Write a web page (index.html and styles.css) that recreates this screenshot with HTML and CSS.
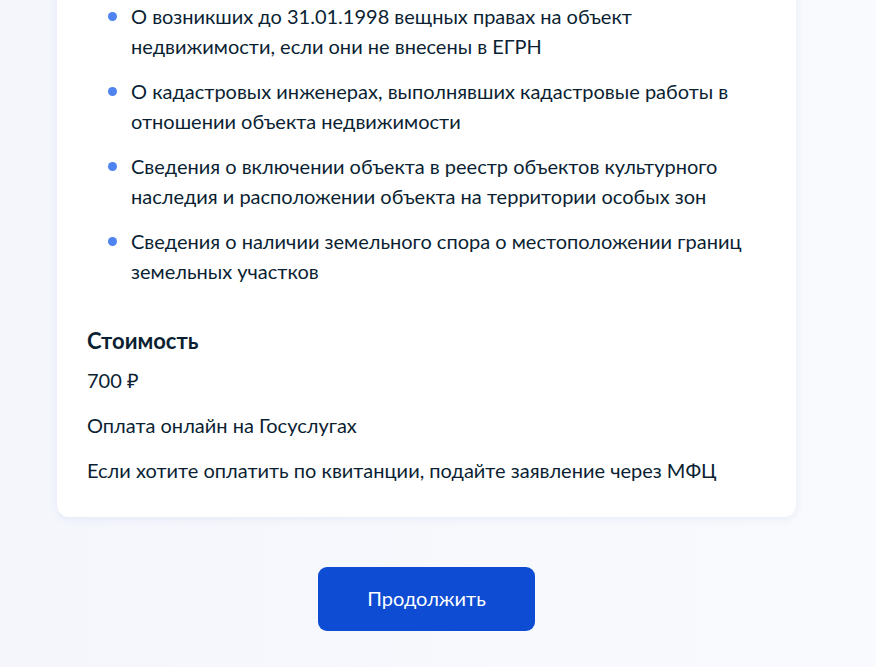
FILE: index.html
```html
<!DOCTYPE html>
<html lang="ru">
<head>
<meta charset="utf-8">
<link rel="stylesheet" href="styles.css">
</head>
<body>
<div class="page">
  <div class="card">
    <ul class="list">
      <li>О возникших до 31.01.1998 вещных правах на объект недвижимости, если они не внесены в ЕГРН</li>
      <li>О кадастровых инженерах, выполнявших кадастровые работы в отношении объекта недвижимости</li>
      <li>Сведения о включении объекта в реестр объектов культурного наследия и расположении объекта на территории особых зон</li>
      <li>Сведения о наличии земельного спора о местоположении границ земельных участков</li>
    </ul>
    <h3 class="title">Стоимость</h3>
    <p class="text">700 ₽</p>
    <p class="text">Оплата онлайн на Госуслугах</p>
    <p class="text">Если хотите оплатить по квитанции, подайте заявление через МФЦ</p>
  </div>
  <div class="actions">
    <button class="btn">Продолжить</button>
  </div>
</div>
</body>
</html>
```
FILE: styles.css
```css
html, body {
  margin: 0;
  padding: 0;
}
body {
  background: linear-gradient(90deg, #f4f6fc 0%, #f7f9fd 60%, #f9fafd 100%);
  font-family: Lato, "Open Sans", sans-serif;
  color: #0b1f33;
  height: 667px;
  overflow: hidden;
}
.page {
  width: 739px;
  margin-left: 57px;
}
.card {
  background: #fff;
  border-radius: 0 0 12px 12px;
  box-shadow: 0 2px 8px rgba(40, 80, 160, 0.08);
  padding: 0 30px 32px 30px;
  margin-top: -23px;
}
.list {
  list-style: none;
  margin: 0;
  padding: 24px 0 0 0;
}
.list li {
  position: relative;
  padding-left: 44px;
  font-size: 20px;
  line-height: 30px;
  margin-bottom: 15px;
}
.list li::before {
  content: "";
  position: absolute;
  left: 21px;
  top: 11px;
  width: 9px;
  height: 9px;
  border-radius: 50%;
  background: #4f83f0;
}
.title {
  margin: 40px 0 0 0;
  font-size: 22px;
  line-height: 30px;
  font-weight: 700;
}
.text {
  margin: 9px 0 0 0;
  font-size: 20px;
  line-height: 30px;
}
.text + .text {
  margin-top: 15px;
}
.actions {
  display: flex;
  justify-content: center;
  padding-top: 50px;
}
.btn {
  width: 217px;
  height: 64px;
  padding: 0 0 3px 0;
  border: none;
  border-radius: 9px;
  background: #0d4cd3;
  color: #fff;
  font-family: Lato, sans-serif;
  font-size: 20px;
  cursor: pointer;
}
```
